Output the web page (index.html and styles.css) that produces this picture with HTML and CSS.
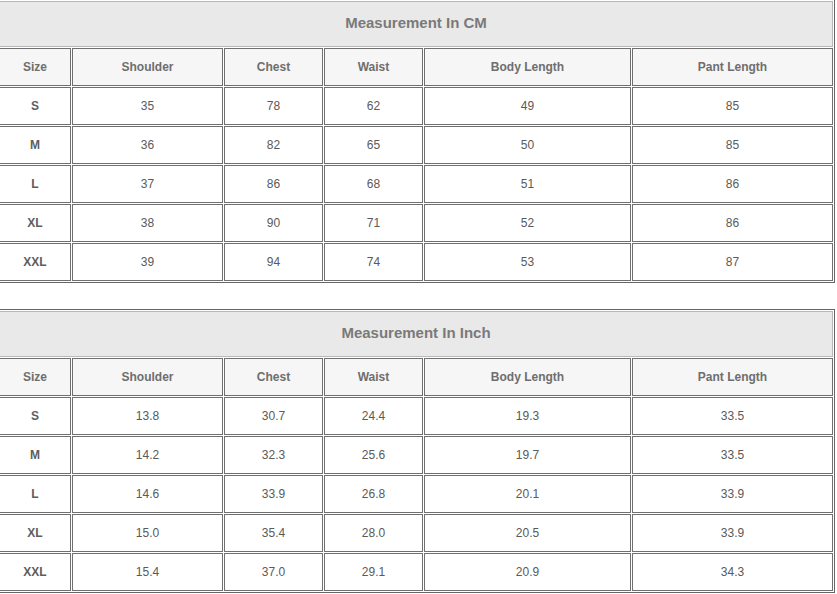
FILE: index.html
```html
<!DOCTYPE html>
<html>
<head>
<meta charset="utf-8">
<link rel="stylesheet" href="styles.css">
</head>
<body>
<div class="page">
  <div class="chart">
    <div class="title">Measurement In CM</div>
    <div class="cell head">Size</div><div class="cell head">Shoulder</div><div class="cell head">Chest</div><div class="cell head">Waist</div><div class="cell head">Body Length</div><div class="cell head">Pant Length</div>
    <div class="cell size">S</div><div class="cell">35</div><div class="cell">78</div><div class="cell">62</div><div class="cell">49</div><div class="cell">85</div>
    <div class="cell size">M</div><div class="cell">36</div><div class="cell">82</div><div class="cell">65</div><div class="cell">50</div><div class="cell">85</div>
    <div class="cell size">L</div><div class="cell">37</div><div class="cell">86</div><div class="cell">68</div><div class="cell">51</div><div class="cell">86</div>
    <div class="cell size">XL</div><div class="cell">38</div><div class="cell">90</div><div class="cell">71</div><div class="cell">52</div><div class="cell">86</div>
    <div class="cell size">XXL</div><div class="cell">39</div><div class="cell">94</div><div class="cell">74</div><div class="cell">53</div><div class="cell">87</div>
  </div>
  <div class="chart">
    <div class="title">Measurement In Inch</div>
    <div class="cell head">Size</div><div class="cell head">Shoulder</div><div class="cell head">Chest</div><div class="cell head">Waist</div><div class="cell head">Body Length</div><div class="cell head">Pant Length</div>
    <div class="cell size">S</div><div class="cell">13.8</div><div class="cell">30.7</div><div class="cell">24.4</div><div class="cell">19.3</div><div class="cell">33.5</div>
    <div class="cell size">M</div><div class="cell">14.2</div><div class="cell">32.3</div><div class="cell">25.6</div><div class="cell">19.7</div><div class="cell">33.5</div>
    <div class="cell size">L</div><div class="cell">14.6</div><div class="cell">33.9</div><div class="cell">26.8</div><div class="cell">20.1</div><div class="cell">33.9</div>
    <div class="cell size">XL</div><div class="cell">15.0</div><div class="cell">35.4</div><div class="cell">28.0</div><div class="cell">20.5</div><div class="cell">33.9</div>
    <div class="cell size">XXL</div><div class="cell">15.4</div><div class="cell">37.0</div><div class="cell">29.1</div><div class="cell">20.9</div><div class="cell">34.3</div>
  </div>
</div>
</body>
</html>
```
FILE: styles.css
```css
html, body {
  margin: 0;
  padding: 0;
  background: #ffffff;
  overflow: hidden;
}
body {
  font-family: "Liberation Sans", Arial, sans-serif;
  font-size: 12px;
  color: #555555;
}
.page {
  display: flex;
  flex-direction: column;
  gap: 26px;
  margin-top: -1px;
  margin-left: -3px;
}
.chart {
  display: grid;
  grid-template-columns: 72px 151px 99px 99px 207px 201px;
  grid-template-rows: 46px repeat(6, 38px);
  gap: 1px;
  padding: 1px;
  border: 1px solid #666666;
  width: max-content;
  background: #ffffff;
}
.title {
  grid-column: 1 / -1;
  box-sizing: border-box;
  border: 1px solid #b8b8b8;
  background: #e9e9e9;
  display: flex;
  align-items: center;
  justify-content: center;
  padding-bottom: 3px;
  font-size: 15px;
  font-weight: bold;
  color: #7a7a7a;
}
.cell {
  box-sizing: border-box;
  border: 1px solid #707070;
  display: flex;
  align-items: center;
  justify-content: center;
  background: #ffffff;
  color: #5a5a5a;
}
.head {
  background: #f6f6f6;
  font-weight: bold;
  color: #6e6e6e;
}
.size {
  font-weight: bold;
  color: #5e5e5e;
}
```
